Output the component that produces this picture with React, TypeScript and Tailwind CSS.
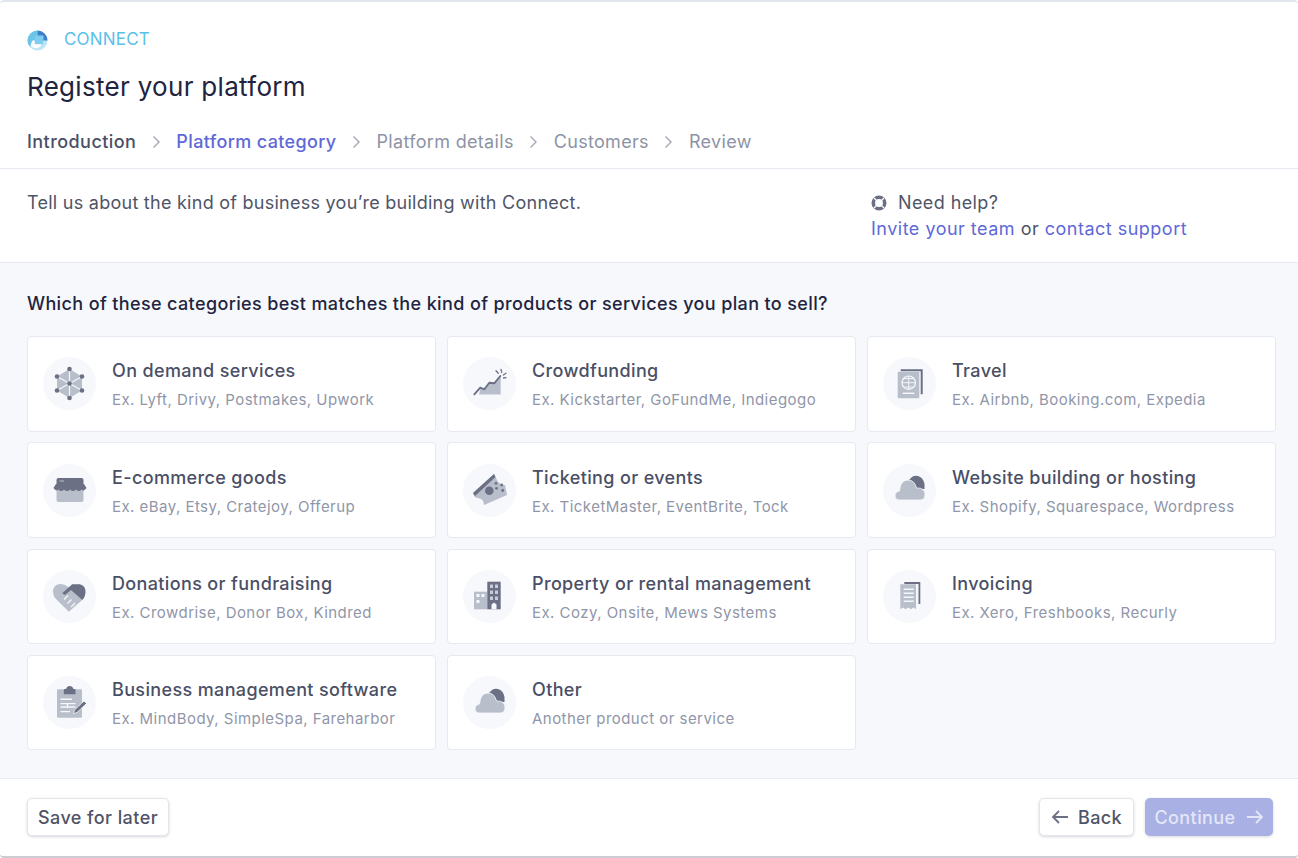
import React from "react";

const D = "#6b7085";
const L = "#b9bfca";
const P = "#f6f8fc";

const cloud = (
  <>
    <path d="M19 10Q23 4.500 28 6 33 7 34.500 14V19H26Z" fill={D} />
    <path d="M9 30Q5 30 5 26 5 22 9.500 21 10.500 10 18 10 24.500 10 26.500 18 35 17.500 35 24.500 35 30 30 30Z" fill={L} stroke={P} strokeWidth="0.800" />
  </>
);

const icons: Record<string, React.ReactNode> = {
  demand: (
    <>
      <path d="M19.500 5 32 12.500V26.500L19.500 34 7 26.500V12.500Z" fill={L} />
      <path d="M19.500 5V34M7 12.500 32 26.500M32 12.500 7 26.500" stroke={P} strokeWidth="1.200" />
      <g fill={D}>
        <circle cx="19.500" cy="5" r="2.300" /><circle cx="32" cy="12.500" r="2.300" /><circle cx="32" cy="26.500" r="2.300" />
        <circle cx="19.500" cy="34" r="2.300" /><circle cx="7" cy="26.500" r="2.300" /><circle cx="7" cy="12.500" r="2.300" /><circle cx="19.500" cy="19.500" r="2.300" />
      </g>
    </>
  ),
  crowd: (
    <>
      <path d="M9 30.500 10.500 24 14.500 25.500 19.500 19 24.500 19.500 30.700 12V30.500Z" fill={L} />
      <path d="M4.300 30.300 10.300 23.700 14.300 25.300 19.300 18.700 24.300 19.300 30.300 12" fill="none" stroke={D} strokeWidth="1.900" strokeLinejoin="round" strokeLinecap="round" />
      <path d="M26 6.700 28.300 9.300M31 5.300 31.700 8.300M36 9.300 33.300 11M36 13.700 33.500 14" stroke={D} strokeWidth="1.300" strokeLinecap="round" />
    </>
  ),
  travel: (
    <>
      <path d="M10.700 5.300H32.700V30.300H30.700V7.300H10.700Z" fill={D} />
      <rect x="7.700" y="7.700" width="21.600" height="26.600" rx="1" fill={L} />
      <circle cx="18.700" cy="18.700" r="6.700" fill="none" stroke={P} strokeWidth="1.200" />
      <path d="M12 18.700H25.400M18.700 12V25.400M14 14.500H23.400M14 23H23.400" stroke={P} strokeWidth="0.900" />
      <path d="M12.700 29.300H24.300" stroke={P} strokeWidth="1.400" />
    </>
  ),
  shop: (
    <>
      <path d="M6.500 17H33.500V30Q33.500 32 31.500 32H8.500Q6.500 32 6.500 30Z" fill={L} />
      <path d="M6.500 10Q6.500 8 8.500 8H31.500Q33.500 8 33.500 10V14H6.500Z" fill={D} />
      <path d="M3.500 18 6 14H34L36.500 18Q34 22 31.500 19.500 29 22.500 26 19.500 23 22.500 20 19.500 17 22.500 14 19.500 11 22.500 8.500 19.500 6 22 3.500 18Z" fill={D} />
      <path d="M9.500 11H14" stroke={L} strokeWidth="1" />
    </>
  ),
  ticket: (
    <>
      <path d="M3 23 24 4 27 10Q29 15 35 15L37 25 14 35Q14 29 8 28 4 28 3 23Z" fill={L} />
      <path d="M3 23 24 4 25.500 7 5 26Z" fill={D} />
      <circle cx="19.300" cy="20.700" r="4.300" fill={D} />
      <g fill={D}><circle cx="26" cy="13.300" r="1.400" /><circle cx="31.700" cy="15" r="1.400" /><circle cx="26.500" cy="18.300" r="1.400" /><circle cx="32.700" cy="20.500" r="1.400" /></g>
    </>
  ),
  cloud,
  heart: (
    <>
      <path d="M9.800 8Q3 9 3 15.700 3 20 6 23L18.800 35.700 32.200 24 20 12 15 9Q12 8 9.800 8Z" fill={L} />
      <path d="M12.200 17.300 22.200 8.300H29.800Q35.500 9.500 35.500 15.700 35.500 21 32.200 24L21 14 15 19Z" fill={D} />
      <path d="M14 23.500 18 19.500M17.500 27.500 21.500 23.500M21 31 25 27" stroke={P} strokeWidth="1.200" />
    </>
  ),
  building: (
    <>
      <path d="M4 15.700H17.300V33.300H4Z" fill={L} />
      <g fill={P}><rect x="6.500" y="18" width="3" height="3" /><rect x="11.500" y="18" width="3" height="3" /><rect x="6.500" y="24" width="3" height="3" /></g>
      <rect x="17.300" y="5.700" width="13.400" height="27.600" fill={D} />
      <g fill="#c8ccd6">
        <rect x="20" y="8.500" width="3" height="3.500" /><rect x="25" y="8.500" width="3" height="3.500" />
        <rect x="20" y="14.500" width="3" height="3.500" /><rect x="25" y="14.500" width="3" height="3.500" />
        <rect x="20" y="20.500" width="3" height="3.500" /><rect x="25" y="20.500" width="3" height="3.500" />
      </g>
      <path d="M21.500 33.300V28.500L24 26.500 26.500 28.500V33.300Z" fill={P} />
    </>
  ),
  invoice: (
    <>
      <path d="M14.300 6H30.300V28H28.500V8H14.300Z" fill={D} />
      <path d="M10.300 8.300H26V33.300L23.500 31.500 21 33.300 18.200 31.500 15.500 33.300 13 31.500 10.300 33.300Z" fill={L} />
      <path d="M13.700 13.300H23.700M13.700 17.300H23.700M13.700 21.300H23.700M13.700 25.300H23.700" stroke={P} strokeWidth="1.400" />
    </>
  ),
  board: (
    <>
      <rect x="7" y="6.300" width="25" height="28.400" rx="1" fill={L} />
      <path d="M13.800 7Q13.800 6 15 6H16Q17 3 19.700 3 22.500 3 23.500 6H24.500Q25.500 6 25.500 7V11.300H13.800Z" fill={D} />
      <path d="M10.500 16.300H22M10.500 20.600H25.500M10.500 24H25.500M10.500 28.600H20M17.500 20V25" stroke={P} strokeWidth="1.400" />
      <path d="M24.500 27 34 18 36.500 20.500 27 29.500 23.500 30.500Z" fill={D} stroke="#fff" strokeWidth="0.700" />
    </>
  ),
};

const cards = [
  ["demand", "On demand services", "Ex. Lyft, Drivy, Postmakes, Upwork"],
  ["crowd", "Crowdfunding", "Ex. Kickstarter, GoFundMe, Indiegogo"],
  ["travel", "Travel", "Ex. Airbnb, Booking.com, Expedia"],
  ["shop", "E-commerce goods", "Ex. eBay, Etsy, Cratejoy, Offerup"],
  ["ticket", "Ticketing or events", "Ex. TicketMaster, EventBrite, Tock"],
  ["cloud", "Website building or hosting", "Ex. Shopify, Squarespace, Wordpress"],
  ["heart", "Donations or fundraising", "Ex. Crowdrise, Donor Box, Kindred"],
  ["building", "Property or rental management", "Ex. Cozy, Onsite, Mews Systems"],
  ["invoice", "Invoicing", "Ex. Xero, Freshbooks, Recurly"],
  ["board", "Business management software", "Ex. MindBody, SimpleSpa, Fareharbor"],
  ["cloud", "Other", "Another product or service"],
];

function Chevron() {
  return (
    <svg width="9" height="14" viewBox="0 0 9 14" className="shrink-0">
      <path d="M1.500 1.500 7 7 1.500 12.500" fill="none" stroke="#a3a9b8" strokeWidth="1.400" />
    </svg>
  );
}

function Card({ icon, title, sub }: { icon: string; title: string; sub: string }) {
  return (
    <div className="flex h-[95.500px] items-center gap-[16px] rounded-[4px] border border-[#e6e9f0] bg-white pl-[15px]">
      <div className="flex h-[53px] w-[53px] shrink-0 items-center justify-center rounded-full bg-[#f6f8fc]">
        <svg width="40" height="40" viewBox="0 0 40 40">{icons[icon]}</svg>
      </div>
      <div className="min-w-0 pt-[2px]">
        <div className="text-[18px] leading-[26px] font-medium tracking-[0.36px] text-[#4a4f66]">{title}</div>
        <div className="mt-[5px] text-[15px] leading-[22px] tracking-[0.46px] text-[#9096a8]">{sub}</div>
      </div>
    </div>
  );
}

export default function App() {
  return (
    <div className="flex h-[858px] w-[1298px] flex-col overflow-hidden rounded-[4px] border-t-2 border-b-2 border-t-[#e3e6ee] border-b-[#c9ccd3] bg-white font-['Inter',sans-serif]">
      <header className="h-[167px] shrink-0 border-b border-[#e6e9f0] px-[27px] pt-[26px]">
        <div className="flex h-[24px] items-center gap-[16px]">
          <svg width="21" height="21" viewBox="0 0 22 22">
            <circle cx="11" cy="11" r="10.500" fill="#bfe6f5" />
            <path d="M11 .5A10.500 10.500 0 0 0 .5 11 10 10 0 0 0 3 17.500Q5 11 11 11Z" fill="#6cc5e8" />
            <path d="M11 .5A10.500 10.500 0 0 1 21.500 11H17V6H11Z" fill="#3d7fc9" />
            <rect x="8" y="6" width="9" height="9" fill="#7fcdee" />
            <path d="M4 16Q5 10 8 11V15H15Q14 19 10 19 6 19 4 16Z" fill="#fff" />
          </svg>
          <span className="text-[17px] tracking-[0.2px] text-[#5bc0e8]">CONNECT</span>
        </div>
        <h1 className="mt-[18px] text-[26px] leading-[34px] font-normal tracking-[0.3px] text-[#22243f]">Register your platform</h1>
        <nav className="mt-[25px] flex items-center gap-[15.500px] text-[18px] leading-[26px] font-normal tracking-[0.32px] text-[#8d93a5]">
          <span className="font-medium tracking-[0.44px] text-[#4a4f66]">Introduction</span>
          <Chevron />
          <span className="font-medium tracking-[0.36px] text-[#6068d8]">Platform category</span>
          <Chevron />
          <span>Platform details</span>
          <Chevron />
          <span>Customers</span>
          <Chevron />
          <span>Review</span>
        </nav>
      </header>

      <section className="flex h-[94px] shrink-0 border-b border-[#e6e9f0] px-[27px] pt-[20px] text-[18px] leading-[27px] text-[#4f5468]">
        <p className="w-[844px] tracking-[0.26px]">Tell us about the kind of business you’re building with Connect.</p>
        <div>
          <div className="flex items-center gap-[11px] tracking-[0.4px]">
            <svg width="16" height="16" viewBox="0 0 16 16">
              <circle cx="8" cy="8" r="5.700" fill="none" stroke={D} strokeWidth="3.600" />
              <path d="M3 3 5.500 5.500M13 3 10.500 5.500M3 13 5.500 10.500M13 13 10.500 10.500" stroke="#fff" strokeWidth="1.200" />
            </svg>
            <span>Need help?</span>
          </div>
          <div className="-mt-px tracking-[0.49px]">
            <span className="text-[#6068d8]">Invite your team</span> or <span className="text-[#6068d8]">contact support</span>
          </div>
        </div>
      </section>

      <main className="flex-1 bg-[#f6f8fc] px-[27px] pt-[27px]">
        <h2 className="text-[18px] leading-[27px] font-medium tracking-[0.37px] text-[#22243f]">
          Which of these categories best matches the kind of products or services you plan to sell?
        </h2>
        <div className="mt-[19px] grid w-[1249px] grid-cols-3 gap-x-[11px] gap-y-[10.750px]">
          {cards.map(([icon, title, sub]) => (
            <Card key={title} icon={icon} title={title} sub={sub} />
          ))}
        </div>
      </main>

      <footer className="flex h-[78px] shrink-0 items-start justify-between border-t border-[#e6e9f0] pt-[19px] pr-[25px] pl-[27px] text-[18px] font-medium tracking-[0.42px]">
        <button className="h-[38px] w-[142px] rounded-[5px] border border-[#e3e5eb] bg-white text-[#4f5468] shadow-[0_1px_3px_rgba(60,66,87,0.2)]">Save for later</button>
        <div className="flex gap-[11px]">
          <button className="flex h-[38px] w-[95px] items-center justify-center gap-[9px] rounded-[5px] border border-[#e3e5eb] bg-white text-[#4f5468] shadow-[0_1px_3px_rgba(60,66,87,0.2)]">
            <svg width="18" height="16" viewBox="0 0 18 16"><path d="M17 8H2M8 2 2 8 8 14" fill="none" stroke={D} strokeWidth="1.800" /></svg>
            Back
          </button>
          <button className="flex h-[38px] w-[128px] items-center justify-center gap-[10px] rounded-[5px] bg-[#a9b0e3] text-[#e3e6f8] shadow-[0_1px_3px_rgba(60,66,87,0.2)]">
            Continue
            <svg width="18" height="16" viewBox="0 0 18 16"><path d="M1 8H16M10 2 16 8 10 14" fill="none" stroke="#e3e6f8" strokeWidth="1.800" /></svg>
          </button>
        </div>
      </footer>
    </div>
  );
}
